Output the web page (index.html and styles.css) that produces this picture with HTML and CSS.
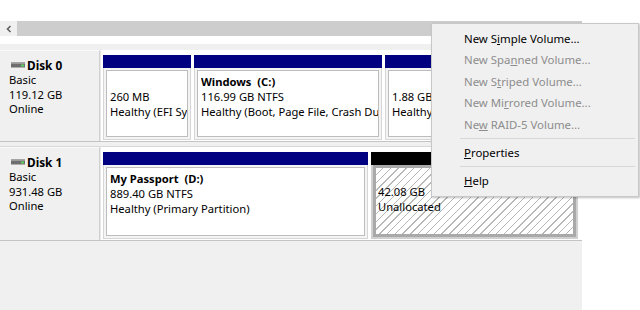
FILE: index.html
```html
<!DOCTYPE html>
<html>
<head>
<meta charset="utf-8">
<link rel="stylesheet" href="styles.css">
</head>
<body>
<div class="page">
  <div class="topspace"></div>
  <div class="hscroll">
    <div class="arrow"><svg width="8" height="8" viewBox="0 0 8 8"><path d="M5.5 1 L2.5 4 L5.5 7" fill="none" stroke="#606060" stroke-width="1.6"/></svg></div>
    <div class="track"></div>
  </div>
  <div class="console">
    <div class="band"></div>
    <div class="disk-row r0">
      <div class="disk-label">
        <div class="disk-name"><svg class="disk-icon" width="14" height="6" viewBox="0 0 14 6"><rect x="0" y="0.5" width="14" height="5" fill="#6e6e6e"/><rect x="0" y="0.5" width="14" height="1.5" fill="#9a9a9a"/><rect x="10" y="2.5" width="3" height="2" fill="#5fd35f"/></svg>Disk 0</div>
        <div>Basic</div>
        <div>119.12 GB</div>
        <div>Online</div>
      </div>
      <div class="parts">
        <div class="part w-efi">
          <div class="phead"></div>
          <div class="pbody"><div class="pin">
            <div class="ln">&nbsp;</div>
            <div class="ln">260 MB</div>
            <div class="ln">Healthy (EFI System Partition)</div>
          </div></div>
        </div>
        <div class="part w-win">
          <div class="phead"></div>
          <div class="pbody"><div class="pin">
            <div class="ln b">Windows  (C:)</div>
            <div class="ln">116.99 GB NTFS</div>
            <div class="ln">Healthy (Boot, Page File, Crash Dump, Primary Partition)</div>
          </div></div>
        </div>
        <div class="part w-rec">
          <div class="phead"></div>
          <div class="pbody"><div class="pin">
            <div class="ln">&nbsp;</div>
            <div class="ln">1.88 GB</div>
            <div class="ln">Healthy (Recovery Partition)</div>
          </div></div>
        </div>
      </div>
    </div>
    <div class="rowsep"></div>
    <div class="disk-row r1">
      <div class="disk-label">
        <div class="disk-name"><svg class="disk-icon" width="14" height="6" viewBox="0 0 14 6"><rect x="0" y="0.5" width="14" height="5" fill="#6e6e6e"/><rect x="0" y="0.5" width="14" height="1.5" fill="#9a9a9a"/><rect x="10" y="2.5" width="3" height="2" fill="#5fd35f"/></svg>Disk 1</div>
        <div>Basic</div>
        <div>931.48 GB</div>
        <div>Online</div>
      </div>
      <div class="parts">
        <div class="part w-pass">
          <div class="phead"></div>
          <div class="pbody"><div class="pin">
            <div class="ln b">My Passport  (D:)</div>
            <div class="ln">889.40 GB NTFS</div>
            <div class="ln">Healthy (Primary Partition)</div>
          </div></div>
        </div>
        <div class="part w-un">
          <div class="phead black"></div>
          <div class="pbody"><div class="pin hatch">
            <div class="ln">&nbsp;</div>
            <div class="ln">42.08 GB</div>
            <div class="ln">Unallocated</div>
          </div></div>
        </div>
      </div>
    </div>
    <div class="bottomline"></div>
  </div>
</div>

<div class="menu">
  <div class="mi">New S<u>i</u>mple Volume...</div>
  <div class="mi dis">New Spa<u>n</u>ned Volume...</div>
  <div class="mi dis">New S<u>t</u>riped Volume...</div>
  <div class="mi dis">New Mi<u>r</u>rored Volume...</div>
  <div class="mi dis">Ne<u>w</u> RAID-5 Volume...</div>
  <div class="msep"></div>
  <div class="mi"><u>P</u>roperties</div>
  <div class="msep"></div>
  <div class="mi"><u>H</u>elp</div>
</div>
</body>
</html>
```
FILE: styles.css
```css
html, body {
  margin: 0;
  padding: 0;
  background: #ffffff;
  width: 640px;
  height: 310px;
  overflow: hidden;
}
body {
  font-family: "Noto Sans", "Open Sans", sans-serif;
  font-size: 11.2px;
  color: #000;
  position: relative;
}
.page {
  width: 582px;
}
.topspace {
  height: 21px;
}
.hscroll {
  height: 15px;
  display: flex;
  background: #f0f0f0;
}
.arrow {
  width: 17px;
  display: flex;
  align-items: center;
  justify-content: center;
}
.track {
  flex: 1;
  background: #cdcdcd;
}
.console {
  margin-top: 8px;
  background: #f0f0f0;
  height: 266px;
}
.band {
  height: 6px;
  background: #f0f0f0;
}
.disk-row {
  display: flex;
  background: #ffffff;
  border-bottom: 1px solid #c4c4c4;
}
.r0 { height: 91px; }
.r1 { height: 93px; }
.rowsep {
  height: 4px;
  border-bottom: 1px solid #d8d8d8;
  background: #f0f0f0;
}
.disk-label {
  width: 100px;
  box-sizing: border-box;
  background: #f0f0f0;
  border-right: 1px solid #d0d0d0;
  border-top: 1px solid #fafafa;
  padding: 7px 0 0 9px;
  line-height: 14.8px;
  color: #000;
}
.disk-name {
  font-weight: bold;
  display: flex;
  align-items: center;
  margin-left: 2px;
  font-size: 11.8px;
}
.disk-icon {
  margin-right: 2px;
}
.parts {
  flex: 1;
  display: flex;
  gap: 3px;
  padding: 5px 4px 1px 2px;
  background: #ffffff;
  border-left: 1px solid #e8e8e8;
}
.part {
  display: flex;
  flex-direction: column;
  min-width: 0;
}
.w-efi { width: 88px; }
.w-win { width: 188px; }
.w-rec { flex: 1; }
.w-pass { width: 265px; }
.w-un { flex: 1; }
.phead {
  height: 13px;
  background: #000080;
  flex: none;
}
.phead.black { background: #000000; }
.pbody {
  flex: 1;
  border: 1px solid #d6d6d6;
  border-top: none;
  padding: 2px;
  background: #f4f4f4;
  display: flex;
  min-height: 0;
}
.pin {
  flex: 1;
  min-width: 0;
  border: 1px solid #bdbdbd;
  background: #ffffff;
  padding: 3px 0 0 3px;
  line-height: 15px;
  overflow: hidden;
}
.ln {
  white-space: pre;
  overflow: hidden;
}
.b { font-weight: bold; }
.w-un .pbody {
  padding: 0;
  border: 2px solid #d0d0d0;
  border-top: none;
}
.hatch {
  border: 3px solid #a9a9a9;
  padding: 1px 0 0 2px;
  background: repeating-linear-gradient(135deg, #ffffff 0 4.5px, #b8b8b8 4.5px 5.5px);
}
.bottomline {
  height: 0;
}
.menu {
  position: absolute;
  left: 431px;
  top: 23px;
  width: 206px;
  height: 168px;
  background: #f0f0f0;
  border: 1px solid #c8c8c8;
  box-shadow: 1px 1px 2px rgba(0,0,0,0.25);
  padding-top: 3.5px;
  box-sizing: content-box;
}
.mi {
  height: 21.5px;
  line-height: 21.5px;
  padding-left: 32px;
  white-space: nowrap;
  font-size: 11.4px;
}
.mi.dis {
  color: #8d8d8d;
}
.msep {
  height: 6.5px;
  margin-left: 28px;
  margin-right: 3px;
  position: relative;
}
.msep::after {
  content: "";
  position: absolute;
  left: 0;
  right: 0;
  top: 3px;
  border-top: 1px solid #d7d7d7;
}
```
